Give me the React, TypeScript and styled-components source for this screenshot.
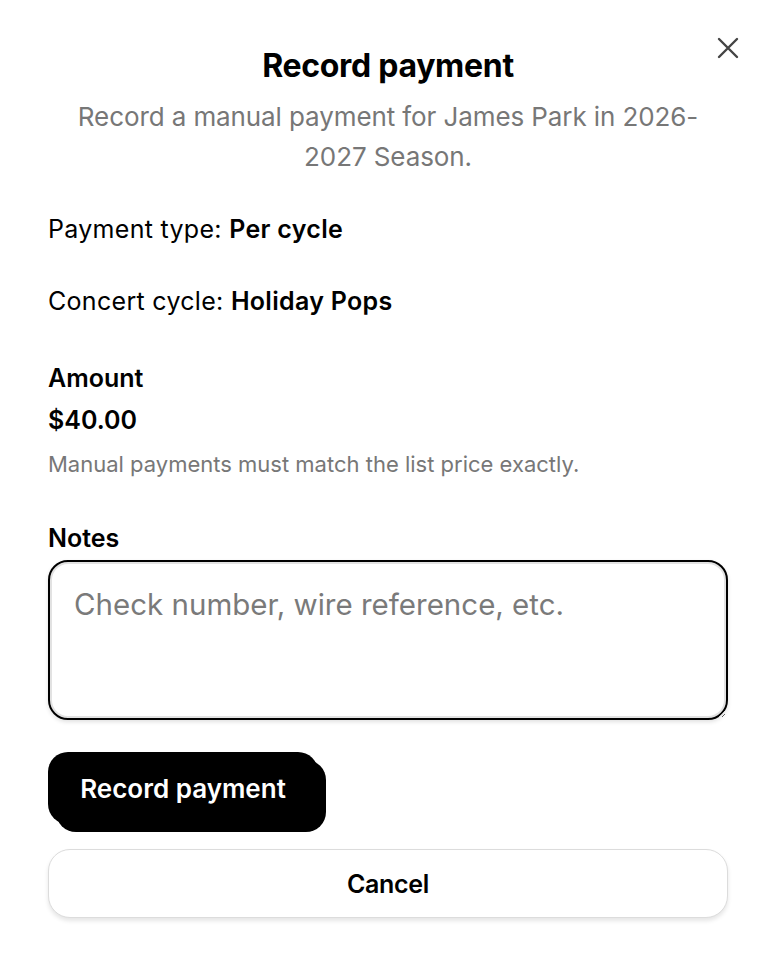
import React from 'react'
import styled, { createGlobalStyle } from 'styled-components'

const GlobalStyle = createGlobalStyle`
  html, body {
    margin: 0;
    padding: 0;
    background: #fff;
  }
  body {
    font-family: 'Inter', 'Noto Sans', sans-serif;
    color: #000;
  }
`

const Dialog = styled.div`
  position: relative;
  width: 776px;
  box-sizing: border-box;
  padding: 46px 48px 40px;
  display: flex;
  flex-direction: column;
`

const CloseBtn = styled.button`
  position: absolute;
  top: 36px;
  right: 36px;
  width: 24px;
  height: 24px;
  padding: 0;
  border: none;
  background: none;
  display: flex;
  align-items: center;
  justify-content: center;
  cursor: pointer;
`

const Title = styled.h2`
  margin: 0;
  font-size: 32px;
  line-height: 40px;
  font-weight: 700;
  text-align: center;
  letter-spacing: -0.3px;
`

const Subtitle = styled.p`
  margin: 11px 0 0;
  padding: 0 20px;
  font-size: 26px;
  line-height: 40px;
  color: #777;
  text-align: center;
  letter-spacing: -0.1px;
`

const InfoRow = styled.div<{ $gap: number }>`
  margin-top: ${p => p.$gap}px;
  font-size: 25px;
  line-height: 32px;
  letter-spacing: 0.3px;
`

const Strong = styled.span`
  font-weight: 600;
`

const Label = styled.div<{ $gap: number }>`
  margin-top: ${p => p.$gap}px;
  font-size: 25px;
  line-height: 32px;
  font-weight: 600;
`

const Hint = styled.div`
  margin-top: 14px;
  font-size: 22px;
  line-height: 28px;
  color: #777;
`

const Notes = styled.textarea`
  margin-top: 6px;
  height: 160px;
  box-sizing: border-box;
  padding: 22px 24px;
  border: 2px solid #000;
  border-radius: 20px;
  box-shadow: inset 0 0 0 2px #e2e2e2, 0 2px 4px rgba(0, 0, 0, 0.12);
  font-family: inherit;
  font-size: 29.5px;
  line-height: 40px;
  color: #000;
  outline: none;
  &::placeholder {
    color: #7a7a7a;
  }
`

const PrimaryBtn = styled.button`
  align-self: flex-start;
  margin-top: 32px;
  width: 270px;
  height: 72px;
  border: none;
  border-radius: 20px;
  background: #000;
  color: #fff;
  box-shadow: 8px 8px 0 #000;
  font-family: inherit;
  font-size: 26px;
  font-weight: 600;
  padding: 0;
  text-align: center;
  cursor: pointer;
`

const SecondaryBtn = styled.button`
  margin-top: 25px;
  height: 69px;
  border: 1.5px solid #dcdcdc;
  border-radius: 22px;
  background: #fff;
  color: #000;
  box-shadow: 0 3px 4px rgba(0, 0, 0, 0.1);
  font-family: inherit;
  font-size: 25px;
  font-weight: 600;
  letter-spacing: -0.3px;
  cursor: pointer;
`

export default function App() {
  return (
    <>
      <GlobalStyle />
      <Dialog role='dialog'>
        <CloseBtn aria-label='Close'>
          <svg width='22' height='22' viewBox='0 0 22 22' fill='none' stroke='#444' strokeWidth='2.4' strokeLinecap='round'>
            <path d='M2 2 L20 20 M20 2 L2 20' />
          </svg>
        </CloseBtn>
        <Title>Record payment</Title>
        <Subtitle>Record a manual payment for James Park in 2026-2027 Season.</Subtitle>
        <InfoRow $gap={36}>
          Payment type: <Strong>Per cycle</Strong>
        </InfoRow>
        <InfoRow $gap={40}>
          Concert cycle: <Strong>Holiday Pops</Strong>
        </InfoRow>
        <Label $gap={45}>Amount</Label>
        <Label $gap={10}>$40.00</Label>
        <Hint>Manual payments must match the list price exactly.</Hint>
        <Label $gap={44}>Notes</Label>
        <Notes placeholder='Check number, wire reference, etc.' />
        <PrimaryBtn>Record payment</PrimaryBtn>
        <SecondaryBtn>Cancel</SecondaryBtn>
      </Dialog>
    </>
  )
}
